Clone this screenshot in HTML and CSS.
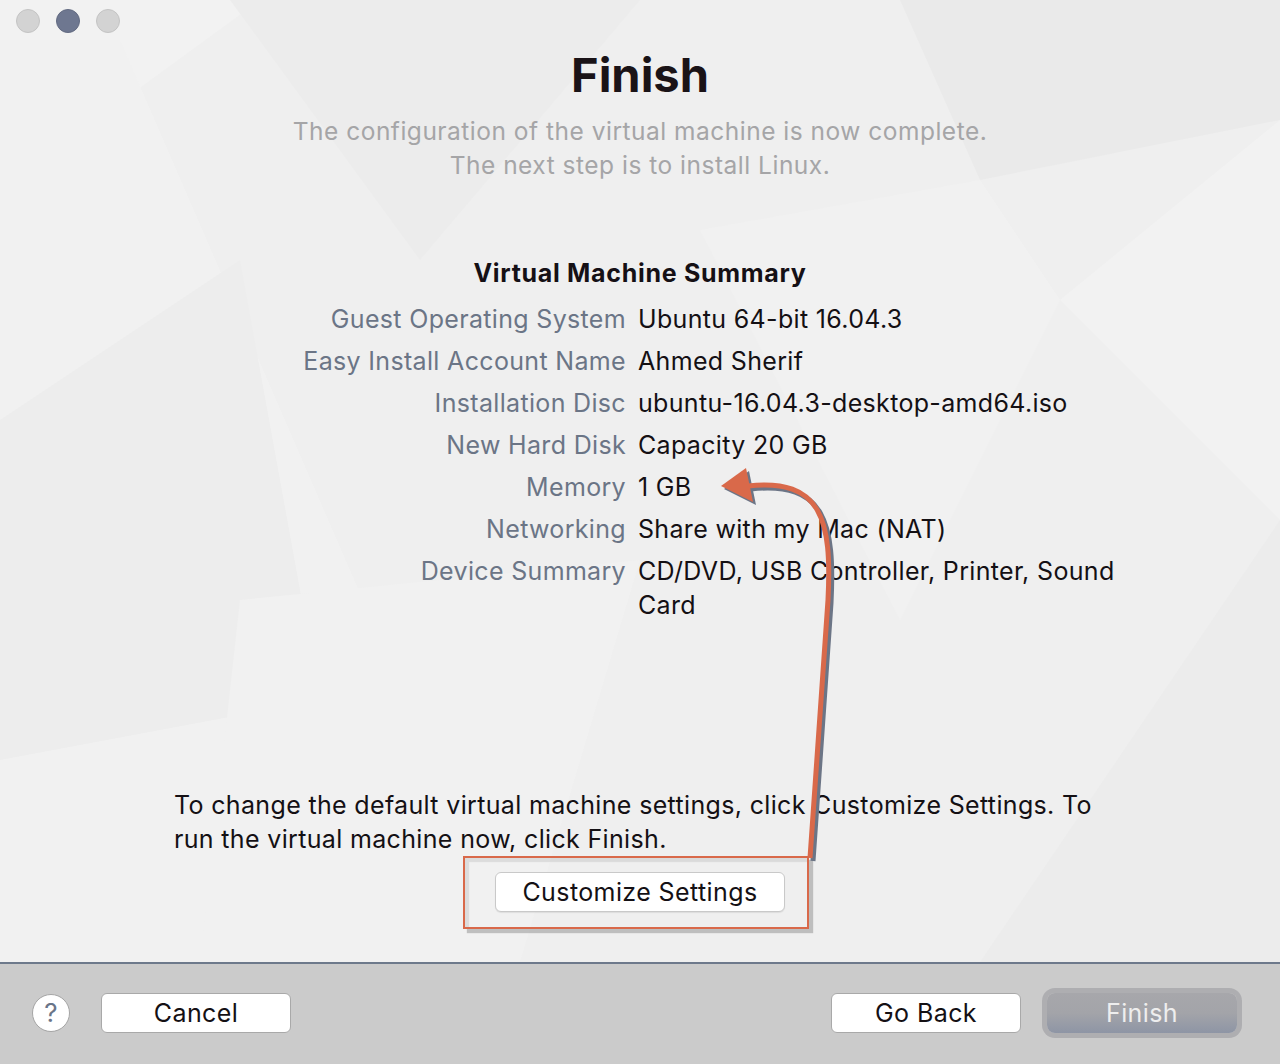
FILE: index.html
```html
<!DOCTYPE html>
<html>
<head>
<meta charset="utf-8">
<title>Finish</title>
<link rel="stylesheet" href="styles.css">
</head>
<body>
<div class="window">
  <div class="content">
    <svg class="bg-pattern" width="1280" height="962" viewBox="0 0 1280 962" aria-hidden="true">
      <polygon points="0,0 260,0 0,190" fill="#f2f2f2"/>
      <polygon points="0,40 120,40 520,962 0,962" fill="#f1f1f1"/>
      <polygon points="230,0 640,0 420,260" fill="#ececec"/>
      <polygon points="900,0 1280,0 1280,120 980,180" fill="#eaeaea"/>
      <polygon points="1280,120 1280,520 1060,300" fill="#f2f2f2"/>
      <polygon points="700,230 980,180 1060,300 900,620" fill="#f1f1f1"/>
      <polygon points="0,420 240,260 320,700 0,760" fill="#ededed"/>
      <polygon points="1280,520 1280,962 980,962" fill="#ececec"/>
      <polygon points="240,600 640,560 520,962 200,962" fill="#f1f1f1"/>
    </svg>
    <div class="traffic">
      <span class="light"></span>
      <span class="light active"></span>
      <span class="light"></span>
    </div>
    <h1 class="title">Finish</h1>
    <p class="subtitle">The configuration of the virtual machine is now complete.<br>The next step is to install Linux.</p>
    <h2 class="summary-title">Virtual Machine Summary</h2>
    <div class="summary">
      <div class="label">Guest Operating System</div><div class="value">Ubuntu 64-bit 16.04.3</div>
      <div class="label">Easy Install Account Name</div><div class="value">Ahmed Sherif</div>
      <div class="label">Installation Disc</div><div class="value">ubuntu-16.04.3-desktop-amd64.iso</div>
      <div class="label">New Hard Disk</div><div class="value">Capacity 20 GB</div>
      <div class="label">Memory</div><div class="value">1 GB</div>
      <div class="label">Networking</div><div class="value">Share with my Mac (NAT)</div>
      <div class="label">Device Summary</div><div class="value">CD/DVD, USB Controller, Printer, Sound Card</div>
    </div>
    <p class="note">To change the default virtual machine settings, click Customize Settings. To run the virtual machine now, click Finish.</p>
    <div class="customize-row">
      <button class="btn customize">Customize Settings</button>
    </div>
    <div class="annot-box"></div>
    <svg class="annot-arrow" width="1280" height="962" viewBox="0 0 1280 962" aria-hidden="true">
      <g transform="translate(3,3)" fill="none" stroke="#6c7586" stroke-width="5">
        <path d="M810 858 L828 600 C832 520 822 478 748 486"/>
      </g>
      <polygon transform="translate(3,3)" points="721,486 746,468 753,502" fill="#6c7586"/>
      <path d="M810 858 L828 600 C832 520 822 478 748 486" fill="none" stroke="#d9694a" stroke-width="5"/>
      <polygon points="721,486 746,468 753,502" fill="#d9694a"/>
    </svg>
  </div>
  <div class="footer">
    <button class="help">?</button>
    <button class="btn fbtn cancel">Cancel</button>
    <div class="spacer"></div>
    <button class="btn fbtn">Go Back</button>
    <button class="btn fbtn finish">Finish</button>
  </div>
</div>
</body>
</html>
```
FILE: styles.css
```css
* { box-sizing: border-box; }
html, body { margin: 0; padding: 0; }
body {
  width: 1280px;
  height: 1064px;
  overflow: hidden;
  font-family: Inter, "Noto Sans", sans-serif;
  background: #cbcbcb;
}
.window {
  width: 1280px;
  height: 1064px;
  display: flex;
  flex-direction: column;
}
.content {
  position: relative;
  height: 962px;
  background: #efefef;
  display: flex;
  flex-direction: column;
  align-items: center;
}
.bg-pattern {
  position: absolute;
  left: 0;
  top: 0;
  z-index: 0;
}
.content > *:not(.bg-pattern):not(.annot-box):not(.annot-arrow) {
  position: relative;
  z-index: 1;
}
.traffic {
  align-self: flex-start;
  display: flex;
  gap: 16px;
  padding: 9px 0 0 16px;
}
.light {
  width: 24px;
  height: 24px;
  border-radius: 50%;
  background: #d3d3d3;
  border: 1px solid #c4c4c4;
}
.light.active {
  background: #6e7790;
  border-color: #636b82;
}
.title {
  margin: 14px 0 0;
  height: 56px;
  line-height: 56px;
  font-size: 47px;
  font-weight: 700;
  color: #1a1317;
  letter-spacing: 0;
}
.subtitle {
  margin: 11px 0 0;
  font-size: 24.5px;
  letter-spacing: 0.5px;
  line-height: 34px;
  color: #a5a5a7;
  text-align: center;
}
.summary-title {
  margin: 74px 0 0;
  font-size: 25px;
  letter-spacing: 0.7px;
  line-height: 34px;
  font-weight: 700;
  color: #151015;
}
.summary {
  align-self: flex-start;
  margin-top: 12px;
  display: grid;
  grid-template-columns: 626px 484px;
  column-gap: 12px;
  row-gap: 8px;
  font-size: 25px;
  letter-spacing: 0.33px;
  line-height: 34px;
}
.label {
  text-align: right;
  color: #6b7586;
  white-space: nowrap;
}
.value {
  color: #141014;
}
.note {
  margin: 166px 0 0;
  width: 932px;
  font-size: 25px;
  letter-spacing: 0.34px;
  line-height: 34px;
  color: #141014;
}
.customize-row {
  margin-top: 16px;
  display: flex;
  justify-content: center;
}
.btn {
  font-family: inherit;
  background: #ffffff;
  border: 1px solid #c9c9c9;
  border-radius: 6px;
  color: #141014;
  padding: 0;
  letter-spacing: 0.4px;
}
.customize {
  width: 290px;
  height: 40px;
  font-size: 25px;
  box-shadow: 0 1px 1px rgba(0,0,0,0.08);
}
.annot-box {
  position: absolute;
  left: 463px;
  top: 856px;
  width: 346px;
  height: 73px;
  border: 2px solid #d9694a;
  box-shadow: 4px 4px 1px rgba(150,150,150,0.55), inset 4px 4px 1px rgba(180,180,180,0.35);
  z-index: 2;
}
.annot-arrow {
  position: absolute;
  left: 0;
  top: 0;
  z-index: 3;
  pointer-events: none;
}
.footer {
  height: 102px;
  border-top: 2px solid #6d798b;
  background: #cbcbcb;
  display: flex;
  align-items: flex-start;
  padding: 29px 43px 0 32px;
}
.help {
  width: 38px;
  height: 38px;
  margin-top: 1px;
  border-radius: 50%;
  background: #ffffff;
  border: 1px solid #a5a5a5;
  color: #6a7588;
  font-family: inherit;
  font-size: 26px;
  line-height: 36px;
  padding: 0;
  margin-right: 31px;
}
.fbtn {
  width: 190px;
  height: 40px;
  font-size: 25px;
  border-color: #a9a9a9;
}
.spacer { flex: 1; }
.finish {
  margin-left: 26px;
  background: linear-gradient(#a7a7ab 0%, #a3a4a9 50%, #8e95a5 100%);
  border: none;
  border-radius: 8px;
  color: #eeeeee;
  box-shadow: 0 0 0 5px #aeaeb1;
}
```
